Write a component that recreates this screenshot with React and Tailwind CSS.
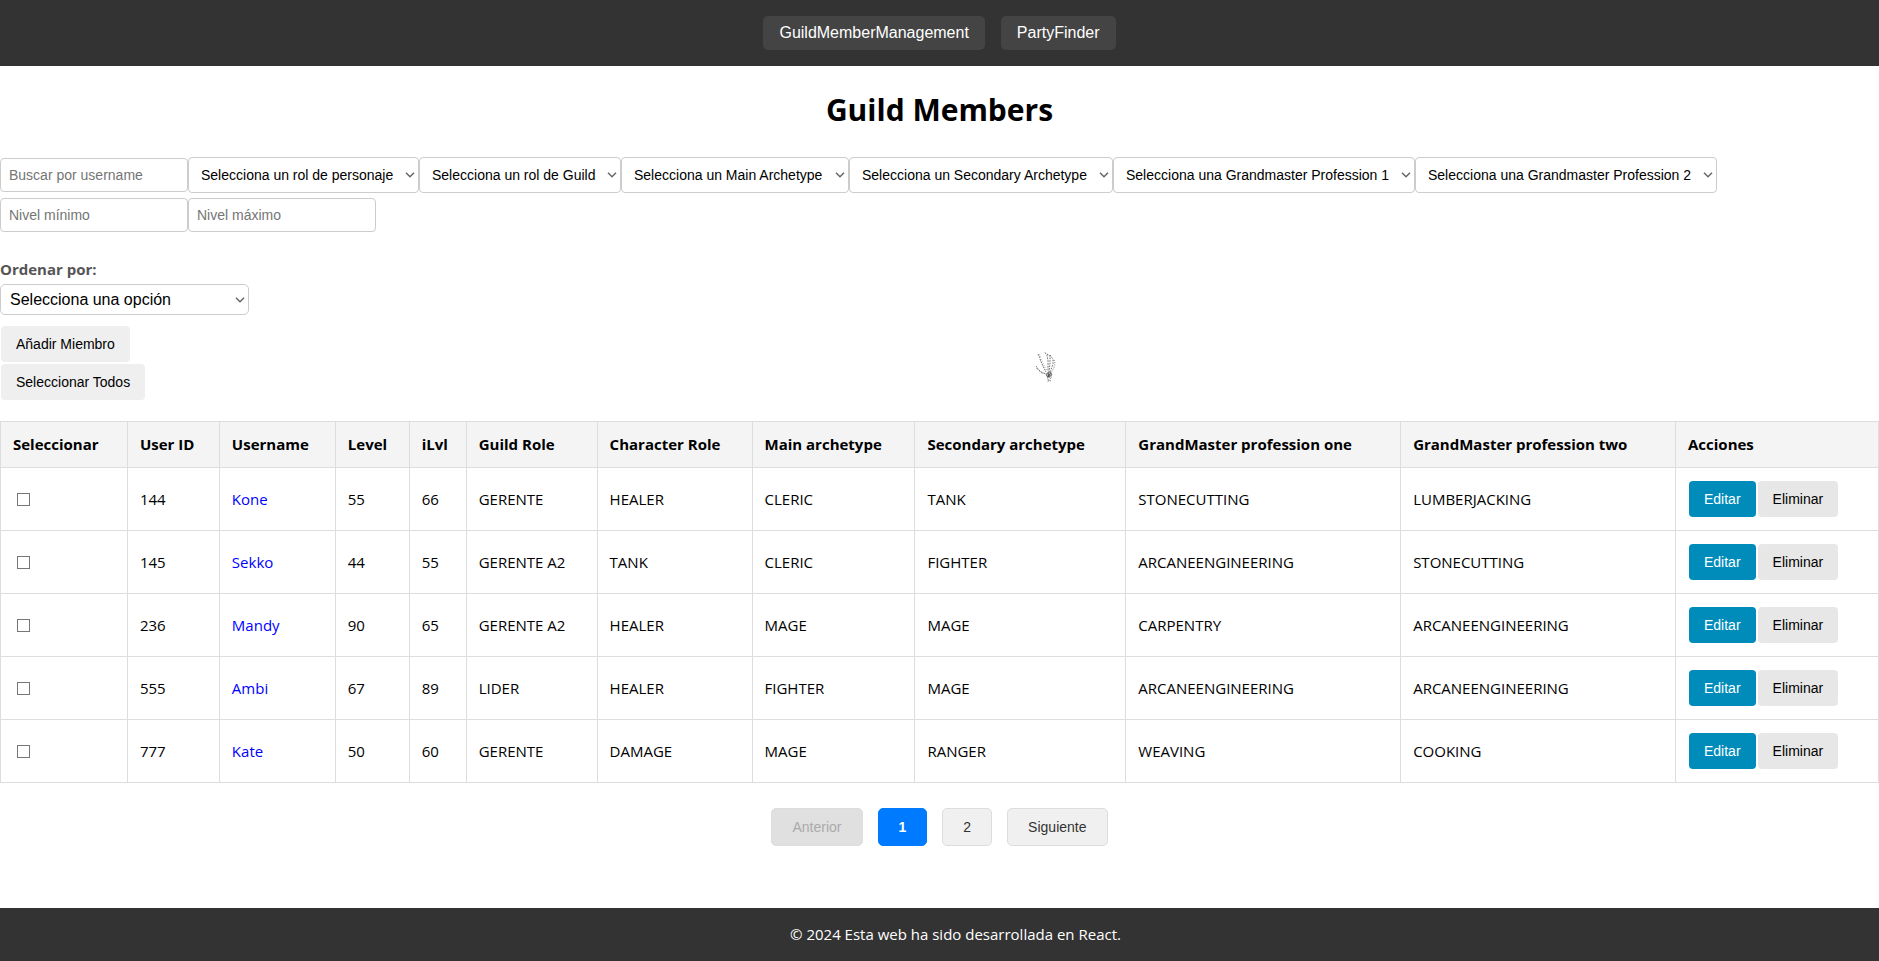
import React from "react";

const filters = [
  { label: "Selecciona un rol de personaje", width: "w-[231px]" },
  { label: "Selecciona un rol de Guild", width: "w-[202px]" },
  { label: "Selecciona un Main Archetype", width: "w-[228px]" },
  { label: "Selecciona un Secondary Archetype", width: "w-[264px]" },
  { label: "Selecciona una Grandmaster Profession 1", width: "w-[302px]" },
  { label: "Selecciona una Grandmaster Profession 2", width: "w-[302px]" },
];

const columns = [
  { label: "Seleccionar", width: "w-[127px]" },
  { label: "User ID", width: "w-[92px]" },
  { label: "Username", width: "w-[116px]" },
  { label: "Level", width: "w-[74px]" },
  { label: "iLvl", width: "w-[57px]" },
  { label: "Guild Role", width: "w-[131px]" },
  { label: "Character Role", width: "w-[155px]" },
  { label: "Main archetype", width: "w-[163px]" },
  { label: "Secondary archetype", width: "w-[211px]" },
  { label: "GrandMaster profession one", width: "w-[275px]" },
  { label: "GrandMaster profession two", width: "w-[275px]" },
  { label: "Acciones", width: "w-[203px]" },
];

const members = [
  ["144", "Kone", "55", "66", "GERENTE", "HEALER", "CLERIC", "TANK", "STONECUTTING", "LUMBERJACKING"],
  ["145", "Sekko", "44", "55", "GERENTE A2", "TANK", "CLERIC", "FIGHTER", "ARCANEENGINEERING", "STONECUTTING"],
  ["236", "Mandy", "90", "65", "GERENTE A2", "HEALER", "MAGE", "MAGE", "CARPENTRY", "ARCANEENGINEERING"],
  ["555", "Ambi", "67", "89", "LIDER", "HEALER", "FIGHTER", "MAGE", "ARCANEENGINEERING", "ARCANEENGINEERING"],
  ["777", "Kate", "50", "60", "GERENTE", "DAMAGE", "MAGE", "RANGER", "WEAVING", "COOKING"],
];

const arial = "font-['Liberation_Sans',Arial,sans-serif]";
const field = `${arial} h-[34px] w-[188px] rounded border border-[#ccc] bg-white px-2 text-sm placeholder:text-[#757575]`;
const action = `${arial} m-px h-9 rounded px-[15px] text-sm`;
const pager = `${arial} h-[38px] rounded-[5px] border px-5 text-sm`;

function NavLink({ children }) {
  return (
    <a href="#" className={`${arial} rounded-[5px] bg-[#444] px-4 py-2 text-base leading-[18px] text-white`}>
      {children}
    </a>
  );
}

function Chevron() {
  return (
    <svg
      aria-hidden="true"
      viewBox="0 0 10 6"
      className="pointer-events-none absolute top-1/2 right-1 h-[6px] w-[10px] -translate-y-1/2"
      fill="none"
      stroke="#666"
      strokeWidth="1.5"
    >
      <path d="M1 0.8l4 4 4-4" />
    </svg>
  );
}

function SkeletonHand() {
  return (
    <svg
      aria-hidden="true"
      viewBox="0 0 20 32"
      className="pointer-events-none absolute top-[351px] left-[1036px] h-8 w-5"
      fill="none"
      stroke="#333"
      strokeWidth="0.7"
    >
      <path d="M2 3l2 4M4 8l2 5M6 13l4 8" strokeDasharray="1.8 0.9" />
      <path d="M3 3l2 4M5 8l3 6M8 14l3 6" strokeDasharray="0.8 1.6" opacity="0.6" />
      <path d="M9 1.5l2 3 1 5v10" strokeDasharray="1.8 1" />
      <path d="M11 3l3 2v7l-1 9" strokeDasharray="1.6 1" />
      <path d="M14 4l3 4v5l-1 3-2 5" strokeDasharray="1.6 1.2" />
      <path d="M18 9l1 3-1 5-3 5" strokeDasharray="0.9 1.4" />
      <path d="M0 15l2 3 3 3 5 2" strokeDasharray="1.8 0.8" />
      <path d="M0 17l3 3 4 3" strokeDasharray="0.9 1.2" opacity="0.6" />
      <path d="M10 23l3-1.500 3 1.500-1 2-4 0.500zM11 24h4M12 21l1 5M15 21l-3 5" />
      <path d="M11 27l5-1M12 29l3 1M15 27l-2 3M12 26v5" strokeDasharray="1.2 0.9" opacity="0.8" />
    </svg>
  );
}

export default function App() {
  return (
    <div className="relative flex min-h-screen flex-col bg-white font-['Open_Sans','Segoe_UI',sans-serif] text-[15px] leading-[21px] text-black">
      <nav className="flex justify-center gap-4 bg-[#333] py-4">
        <NavLink>GuildMemberManagement</NavLink>
        <NavLink>PartyFinder</NavLink>
      </nav>

      <main className="grow">
        <h1 className="mt-[23px] text-center text-[30px] leading-[42px] font-bold">Guild Members</h1>

        <div className="mt-[26px] flex flex-wrap items-center gap-y-[5px]">
          <input aria-label="Buscar por username" placeholder="Buscar por username" className={field} />
          {filters.map((f) => (
            <div key={f.label} className={`relative ${f.width}`}>
              <select
                aria-label={f.label}
                className={`${arial} block h-9 w-full appearance-none rounded border border-[#ccc] bg-white px-3 text-sm`}
              >
                <option>{f.label}</option>
              </select>
              <Chevron />
            </div>
          ))}
          <div className="flex w-full">
            <input aria-label="Nivel mínimo" placeholder="Nivel mínimo" className={field} />
            <input aria-label="Nivel máximo" placeholder="Nivel máximo" className={field} />
          </div>
        </div>

        <div className="mt-[27px] flex flex-col items-start gap-1">
          <label htmlFor="orden" className="font-bold text-[#555]">
            Ordenar por:
          </label>
          <div className="relative w-[249px]">
            <select
              id="orden"
              className={`${arial} block h-[31px] w-full appearance-none rounded-[5px] border border-[#ccc] bg-white px-[9px] text-base`}
            >
              <option>Selecciona una opción</option>
            </select>
            <Chevron />
          </div>
        </div>

        <div className="mt-[10px] flex flex-col items-start">
          <button type="button" className={`${action} bg-[#efefef]`}>Añadir Miembro</button>
          <button type="button" className={`${action} bg-[#efefef]`}>Seleccionar Todos</button>
        </div>

        <table className="mt-5 w-full border-collapse text-left">
          <thead>
            <tr className="bg-[#f4f4f4]">
              {columns.map((c) => (
                <th key={c.label} className={`${c.width} border border-[#ddd] px-3 py-3 font-bold whitespace-nowrap`}>
                  {c.label}
                </th>
              ))}
            </tr>
          </thead>
          <tbody>
            {members.map((m) => (
              <tr key={m[0]}>
                <td className="border border-[#ddd] px-3 py-3">
                  <input
                    type="checkbox"
                    aria-label={`Seleccionar ${m[1]}`}
                    className="ml-1 block size-[13px] appearance-none border border-[#767676] bg-white checked:bg-[#008cba]"
                  />
                </td>
                {m.map((value, i) => (
                  <td key={i} className="border border-[#ddd] px-3 py-3">
                    {i === 1 ? <a href="#" className="text-[#00f]">{value}</a> : value}
                  </td>
                ))}
                <td className="border border-[#ddd] px-3 py-3">
                  <div className="flex">
                    <button type="button" className={`${action} bg-[#008cba] text-white`}>Editar</button>
                    <button type="button" className={`${action} bg-[#e7e7e7]`}>Eliminar</button>
                  </div>
                </td>
              </tr>
            ))}
          </tbody>
        </table>

        <div className="my-[25px] flex justify-center gap-[15px]">
          <button type="button" disabled className={`${pager} border-[#ddd] bg-[#e0e0e0] text-[#aaa]`}>Anterior</button>
          <button type="button" className={`${pager} border-[#007bff] bg-[#007bff] font-bold text-white`}>1</button>
          <button type="button" className={`${pager} border-[#ddd] bg-[#f0f0f0] text-[#333]`}>2</button>
          <button type="button" className={`${pager} border-[#ddd] bg-[#f0f0f0] text-[#333]`}>Siguiente</button>
        </div>
      </main>

      <footer className="bg-[#333] py-4 pl-8 text-center text-white">
        <p>© 2024 Esta web ha sido desarrollada en React.</p>
      </footer>

      <SkeletonHand />
    </div>
  );
}
